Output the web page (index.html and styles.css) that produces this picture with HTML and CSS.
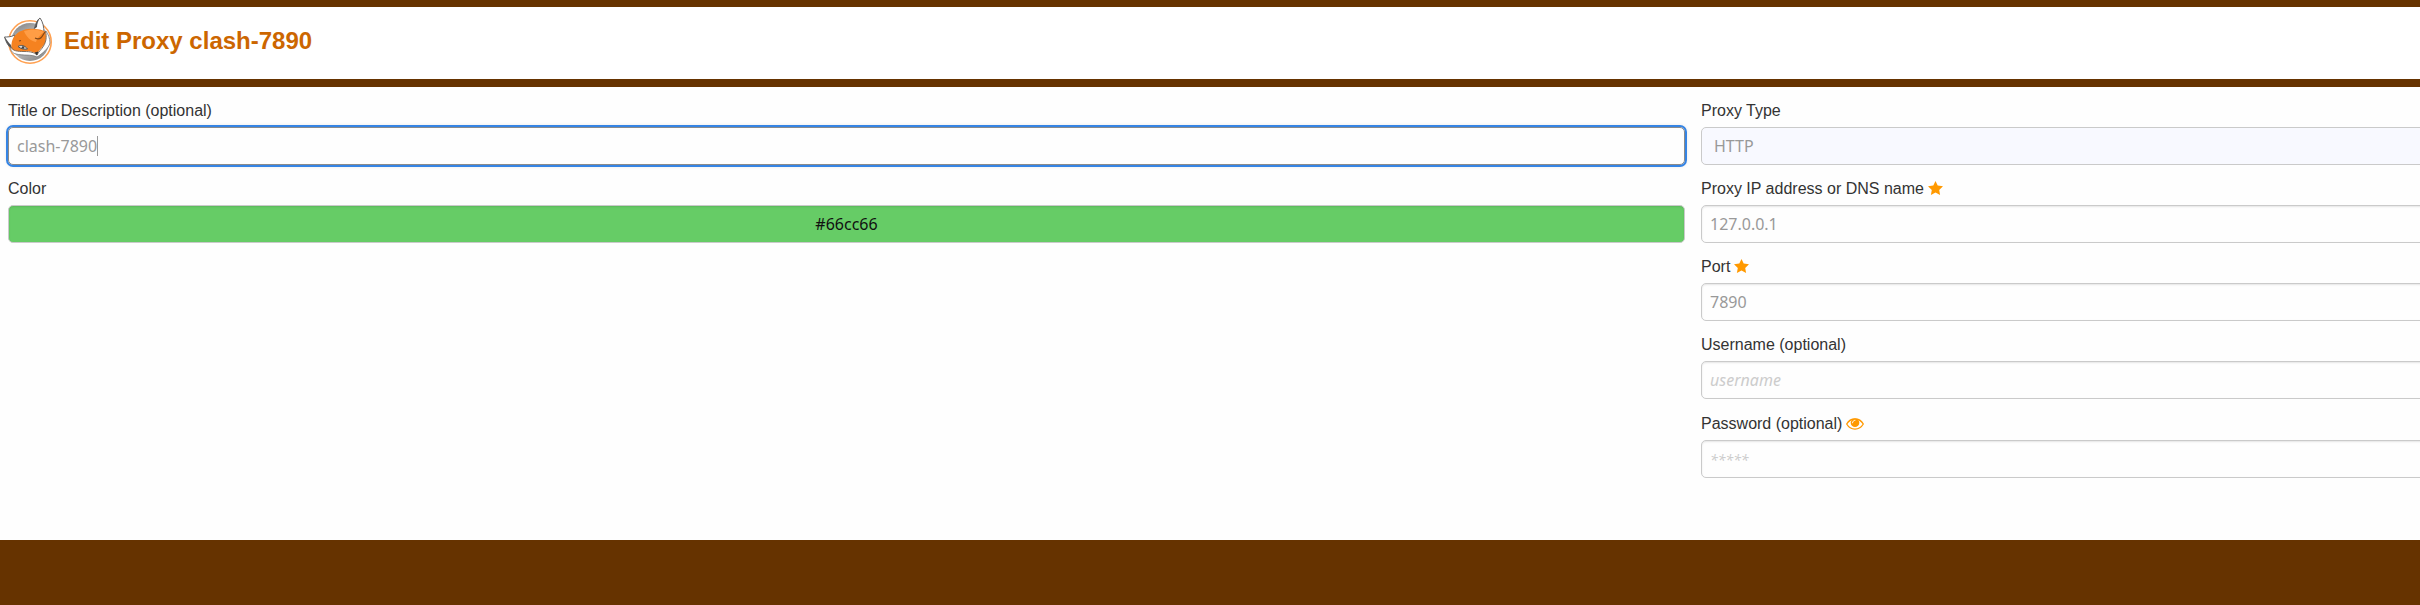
FILE: index.html
```html
<!DOCTYPE html>
<html lang="en">
<head>
<meta charset="utf-8">
<title>Edit Proxy clash-7890</title>
<link rel="stylesheet" href="styles.css">
</head>
<body>
<header class="header">
  <svg class="logo" viewBox="0 0 48 48" aria-hidden="true">
    <defs>
      <linearGradient id="disc" x1="0.2" y1="0" x2="0.7" y2="1">
        <stop offset="0" stop-color="#858585"/><stop offset="0.5" stop-color="#ccc"/><stop offset="1" stop-color="#8a8a8a"/>
      </linearGradient>
    </defs>
    <circle cx="26" cy="25" r="21.200" fill="#fff" stroke="#ffa050" stroke-width="1.600"/>
    <circle cx="26" cy="25" r="19" fill="url(#disc)"/>
    <path d="M30 13 C31 8 33 3 36 1 C39 5 40 10 40 16Z" fill="#fff" stroke="#666" stroke-width="1"/>
    <path d="M36 1 C33 3 31 8 30.500 12 L33 10 C33 7 34 4 36 1Z" fill="#555"/>
    <path d="M11 18 C7 20 3 20 0.500 20 C2 25 4 29 8 32Z" fill="#fff" stroke="#666" stroke-width="1"/>
    <path d="M0.500 20 C2 25 4 29 8 32 L7 28 C4 25 3 23 0.500 20Z" fill="#555"/>
    <path d="M7 30 C6 33 8 36 12 37 C19 39 27 37 33 40 C38 37 45 31 46 26 C46 21 44 17 42 14Z" fill="#fff" stroke="#777" stroke-width="0.800"/>
    <path d="M7.500 31 C7 25 9 20 12 17.500 C18 12 25 11.500 31 12 C35 12 39 13 41.500 15 C42.500 21 42 26 39 29 C37 32 34.500 34 32.500 37 C28 33 20 35 13 34 C10 33.500 8 33 7.500 31Z" fill="#f58220"/>
    <path d="M20 14 C27 11.500 35 12 40 15 C36 18 33 21 32 25 C27 24 22 20 20 14Z" fill="#ff9d45"/>
    <path d="M41.500 14 C43 20 42 25 39.500 29 C38 32 35 34 33 38 M7.500 30 C8 34 14 34.500 20 34.500 C27 34.500 30 35.500 33 38" fill="none" stroke="#75614f" stroke-width="0.900"/>
    <path d="M14 29.500 C17 27.500 21 28.500 23.500 32 C20 32.500 17 32 14 29.500Z" fill="#ddd" stroke="#555" stroke-width="1"/>
    <circle cx="19" cy="30.500" r="1.300" fill="#444"/>
    <path d="M15 24 L17 23.500 M31 21 C34 22.500 37 22 39 18 L41 15" fill="none" stroke="#804718" stroke-width="1.200"/>
    <path d="M30.500 35.500 L34.500 34.500 L33 38.500Z" fill="#333"/>
  </svg>
  <h1 class="title">Edit Proxy clash-7890</h1>
</header>
<main class="main">
  <form class="form">
    <div class="column">
      <div class="field">
        <label class="label" for="title">Title or Description (optional)</label>
        <div class="active">
          <input class="control focused" id="title" type="text" value="clash-7890">
          <span class="caret"></span>
        </div>
      </div>
      <div class="field">
        <label class="label" for="color">Color</label>
        <input class="control color" id="color" type="text" value="#66cc66">
      </div>
    </div>
    <div class="column">
      <div class="field">
        <label class="label" for="type">Proxy Type</label>
        <select class="control select" id="type"><option>HTTP</option></select>
      </div>
      <div class="field">
        <label class="label" for="address">Proxy IP address or DNS name
          <svg class="star" viewBox="0 0 15 14" aria-hidden="true"><path d="M7.500 0 L9.700 4.600 L15 5.300 L11.200 8.900 L12.100 14 L7.500 11.600 L2.900 14 L3.800 8.900 L0 5.300 L5.300 4.600Z"/></svg>
        </label>
        <input class="control" id="address" type="text" value="127.0.0.1">
      </div>
      <div class="field">
        <label class="label" for="port">Port
          <svg class="star" viewBox="0 0 15 14" aria-hidden="true"><path d="M7.500 0 L9.700 4.600 L15 5.300 L11.200 8.900 L12.100 14 L7.500 11.600 L2.900 14 L3.800 8.900 L0 5.300 L5.300 4.600Z"/></svg>
        </label>
        <input class="control" id="port" type="text" value="7890">
      </div>
      <div class="field">
        <label class="label" for="username">Username (optional)</label>
        <input class="control" id="username" type="text" placeholder="username">
      </div>
      <div class="field secret">
        <div class="label">
          <label for="password">Password (optional)</label>
          <button class="reveal" type="button" aria-label="Show password">
            <svg class="eye" viewBox="0 0 18 12" aria-hidden="true">
              <path d="M0.700 6 C4.500 -0.700 13.500 -0.700 17.300 6 C13.500 12.700 4.500 12.700 0.700 6Z" fill="none" stroke="#f90" stroke-width="1.300"/>
              <circle cx="9" cy="4.800" r="4.300" fill="#f90"/>
              <path d="M6.500 4.800 C6.500 3.400 7.600 2.300 9 2.300" fill="none" stroke="#fff" stroke-width="0.900" stroke-linecap="round"/>
            </svg>
          </button>
        </div>
        <input class="control" id="password" type="password" placeholder="*****">
      </div>
    </div>
  </form>
</main>
</body>
</html>
```
FILE: styles.css
```css
* {
  box-sizing: border-box;
}

body {
  margin: 0;
  background: #630;
  color: #333;
  font: 16px/24px "Liberation Sans", Arial, sans-serif;
}

.header {
  display: flex;
  align-items: flex-start;
  gap: 12px;
  padding: 10px 4px 14px;
  border-top: 7px solid #630;
  border-bottom: 8px solid #630;
  background: #fff;
}

.logo {
  width: 48px;
  height: 48px;
}

.title {
  margin: 0;
  color: #c60;
  font-size: 24px;
  line-height: 48px;
}

.main {
  overflow-x: clip;
  padding: 12px 0 62px;
  background: #fefefe;
}

/* The form is wider than the window and runs past its right edge. */
.form {
  display: grid;
  grid-template-columns: 1fr 1fr;
  gap: 16px;
  width: 140%;
  padding: 0 10px 0 8px;
}

.column {
  display: flex;
  flex-direction: column;
  gap: 12px;
}

.field {
  display: flex;
  flex-direction: column;
  gap: 4px;
}

.label {
  display: flex;
  align-items: center;
  gap: 4px;
}

.control {
  display: block;
  width: 100%;
  height: 38px;
  margin: 0;
  padding: 0 8px;
  border: 1px solid #cacaca;
  border-radius: 5px;
  outline: none;
  background: #fefefe;
  box-shadow: inset 0 1px 2px rgba(10, 10, 10, 0.1);
  color: #999;
  font: 16px/24px "Noto Sans", sans-serif;
}

.control::placeholder {
  color: #ccc;
  font-style: italic;
  opacity: 1;
}

.active {
  position: relative;
}

.focused {
  border-color: #8a8a8a;
  outline: 2px solid #3584e4;
  outline-offset: 0;
  box-shadow: 0 0 5px #cacaca;
}

.caret {
  position: absolute;
  top: 9px;
  left: 89px;
  width: 1px;
  height: 20px;
  background: #999;
}

.color {
  background: #6c6;
  color: #111;
  text-align: center;
}

.select {
  appearance: none;
  padding: 0 12px;
  background: #f8f9ff;
  box-shadow: none;
}

.secret {
  padding-top: 1px;
}

.secret .control::placeholder {
  font-size: 14px;
}

.star {
  width: 15px;
  height: 14px;
  margin-bottom: 2px;
  fill: #f90;
}

.reveal {
  display: flex;
  padding: 0;
  border: 0;
  background: none;
}

.eye {
  width: 18px;
  height: 12px;
}
```
